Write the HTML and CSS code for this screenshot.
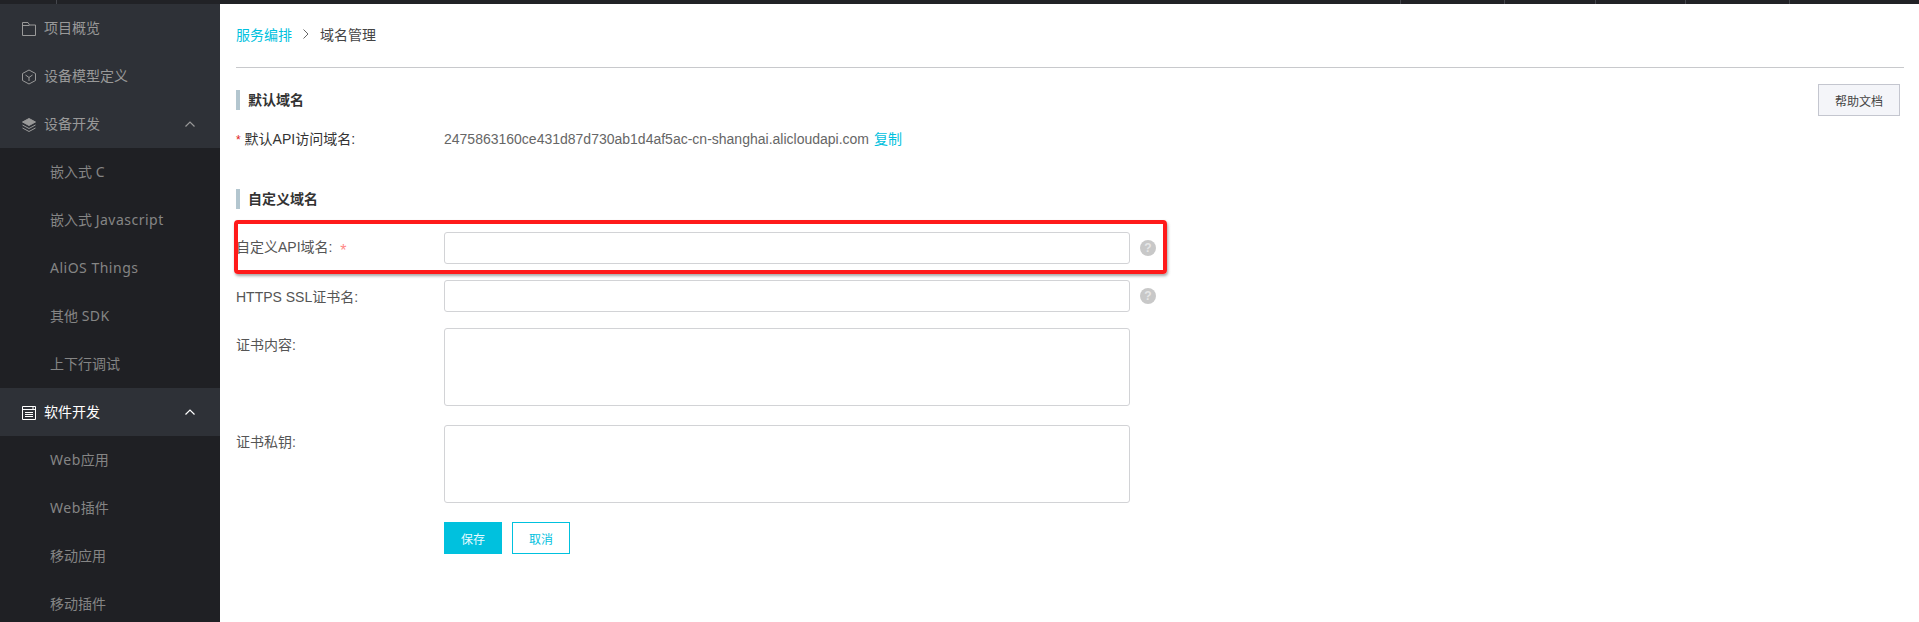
FILE: index.html
```html
<!DOCTYPE html>
<html lang="zh">
<head>
<meta charset="utf-8">
<title>域名管理</title>
<link rel="stylesheet" href="styles.css">
</head>
<body>
<div class="topbar"><i class="tick t1"></i><i class="tick t2"></i><i class="tick t3"></i><i class="tick t4"></i><i class="tick t5"></i><i class="tick t6"></i></div>
<div class="shell">
  <aside class="sidebar">
    <div class="nav-item"><svg class="nav-icon" viewBox="0 0 16 16" fill="none" stroke="currentColor"><path d="M1.5 14.5V1.5H7L8.5 4H14.5V14.5ZM1.5 4.5H8.5"/></svg><span>项目概览</span></div>
    <div class="nav-item"><svg class="nav-icon" viewBox="0 0 16 16" fill="none" stroke="currentColor"><path d="M8 1L14.5 4.5V11.5L8 15L1.5 11.5V4.5ZM4.5 6L8 8.5L11.5 6M8 8.5V12"/></svg><span>设备模型定义</span></div>
    <div class="nav-item"><svg class="nav-icon" viewBox="0 0 16 16" fill="none" stroke="currentColor"><path d="M8 1.5L14.5 5L8 8.5L1.5 5Z" fill="currentColor"/><path d="M1.5 8L8 11.5L14.5 8M1.5 11L8 14.5L14.5 11"/></svg><span>设备开发</span><svg class="chevron" viewBox="0 0 10 6" fill="none" stroke="currentColor" stroke-width="1.2"><path d="M.5 5.5L5 1L9.5 5.5"/></svg></div>
    <div class="sub-item"><span>嵌入式 <b class="latin">C</b></span></div>
    <div class="sub-item"><span>嵌入式 <b class="latin">Javascript</b></span></div>
    <div class="sub-item"><b class="latin">AliOS Things</b></div>
    <div class="sub-item"><span>其他 <b class="latin">SDK</b></span></div>
    <div class="sub-item">上下行调试</div>
    <div class="nav-item active"><svg class="nav-icon" viewBox="0 0 16 16" fill="none" stroke="currentColor"><path d="M1.5 1.5H14.5V14.5H1.5ZM1.5 4.5H14.5M11 3H13M4 7.5H12M4 9.5H12M4 11.5H12"/></svg><span>软件开发</span><svg class="chevron" viewBox="0 0 10 6" fill="none" stroke="currentColor" stroke-width="1.2"><path d="M.5 5.5L5 1L9.5 5.5"/></svg></div>
    <div class="sub-item"><span><b class="latin">Web</b>应用</span></div>
    <div class="sub-item"><span><b class="latin">Web</b>插件</span></div>
    <div class="sub-item">移动应用</div>
    <div class="sub-item">移动插件</div>
  </aside>
  <main class="content">
    <div class="breadcrumb"><a class="link">服务编排</a><svg class="crumb-sep" viewBox="0 0 8 12" fill="none" stroke="currentColor"><path d="M1.5 1.5L6 6L1.5 10.5"/></svg><span>域名管理</span></div>
    <div class="section-head">
      <h2 class="section-title">默认域名</h2>
      <button class="help-btn" type="button">帮助文档</button>
    </div>
    <div class="info-row">
      <div class="label strong"><span class="mini-star">*</span> 默认API访问域名:</div>
      <div class="value">2475863160ce431d87d730ab1d4af5ac-cn-shanghai.alicloudapi.com <a class="link copy">复制</a></div>
    </div>
    <h2 class="section-title second">自定义域名</h2>
    <div class="form">
      <div class="form-row">
        <label class="label">自定义API域名: <span class="star">*</span></label>
        <input class="field" type="text">
        <span class="hint">?</span>
      </div>
      <div class="form-row">
        <label class="label">HTTPS SSL证书名:</label>
        <input class="field" type="text">
        <span class="hint">?</span>
      </div>
      <div class="form-row tall">
        <label class="label">证书内容:</label>
        <textarea class="field area"></textarea>
      </div>
      <div class="form-row tall">
        <label class="label">证书私钥:</label>
        <textarea class="field area"></textarea>
      </div>
      <div class="actions">
        <button class="btn primary" type="button">保存</button>
        <button class="btn outline" type="button">取消</button>
      </div>
    </div>
    <div class="annotation"></div>
  </main>
</div>
</body>
</html>
```
FILE: styles.css
```css
* { box-sizing: border-box; }
html, body { margin: 0; height: 100%; overflow: hidden; background: #fff; }
body { font-family: "Liberation Sans", "Noto Sans CJK SC", sans-serif; font-size: 14px; color: #333; }
.topbar { height: 4px; background: #212226; position: relative; }
.tick { position: absolute; top: 0; width: 1px; height: 4px; background: #44464c; }
.t1 { left: 56px; }
.t2 { left: 1400px; }
.t3 { left: 1504px; }
.t4 { left: 1595px; }
.t5 { left: 1685px; }
.t6 { left: 1789px; }
.shell { display: flex; height: 618px; }
.sidebar { width: 220px; flex: none; background: #1f2024; overflow: hidden; font-family: "Noto Sans", "Noto Sans CJK SC", sans-serif; }
.nav-item { height: 48px; display: flex; align-items: center; padding: 0 0 2px 21px; background: #2e3137; color: #999; font-size: 14px; }
.nav-item span { margin-left: 7px; flex: 1; }
.nav-item.active { color: #fff; }
.nav-icon { width: 16px; height: 16px; flex: none; margin-top: 4px; }
.chevron { width: 10px; height: 6px; margin: 2px 25px 0 0; flex: none; }
.sub-item { height: 48px; display: flex; align-items: center; padding: 0 0 2px 50px; color: #858585; font-size: 14px; }
.latin { font-weight: normal; letter-spacing: .5px; }
.content { flex: 1; position: relative; padding: 0 15px 0 16px; }
.link { color: #00c1de; text-decoration: none; }
.copy { margin-left: 1px; }
.breadcrumb { height: 64px; border-bottom: 1px solid #c8c9cc; display: flex; align-items: center; padding-bottom: 3px; color: #444; }
.crumb-sep { width: 8px; height: 12px; margin: 0 10px; color: #666; }
.section-head { display: flex; justify-content: space-between; align-items: flex-start; margin-top: 16px; padding-right: 4px; height: 33px; }
.section-title { margin: 0; height: 20px; line-height: 20px; border-left: 4px solid #b3c6cf; padding-left: 8px; font-size: 14px; font-weight: bold; color: #333; }
.section-head .section-title { margin-top: 6px; }
.section-title.second { margin-top: 39px; }
.help-btn { width: 82px; height: 32px; background: #f4f5f9; border: 1px solid #c4c6cf; color: #444; font: 12px "Liberation Sans", "Noto Sans CJK SC", sans-serif; padding: 0; }
.info-row { display: flex; align-items: center; height: 24px; margin-top: 9px; }
.label { width: 208px; flex: none; color: #555; font-size: 14px; padding-bottom: 1px; }
.label.strong { color: #333; padding-bottom: 0; }
.mini-star { color: #e02020; font-size: 12px; }
.value { color: #666; font-size: 14px; }
.form { margin-top: 23px; }
.form-row { display: flex; align-items: center; height: 32px; margin-bottom: 16px; }
.form-row.tall { height: 78px; align-items: flex-start; margin-bottom: 19px; }
.form-row.tall .label { padding-top: 6px; }
.star { color: #f88; margin-left: 4px; font-size: 16px; line-height: 1; vertical-align: -4px; }
.field { width: 686px; height: 32px; border: 1px solid #d2d3d6; border-radius: 3px; background: #fff; outline: none; padding: 0; }
.area { height: 78px; resize: none; display: block; }
.hint { width: 16px; height: 16px; border-radius: 50%; background: #c8c8c8; color: #e6e6e6; font-size: 12px; font-weight: bold; line-height: 16px; text-align: center; margin-left: 10px; }
.actions { display: flex; gap: 10px; margin-left: 208px; }
.btn { width: 58px; height: 32px; font: 12px "Liberation Sans", "Noto Sans CJK SC", sans-serif; padding: 0; }
.primary { background: #00c1de; border: 1px solid #00c1de; color: #e8fbff; }
.outline { background: #fff; border: 1px solid #00c1de; color: #00c1de; }
.annotation { position: absolute; left: 14px; top: 216px; width: 933px; height: 54px; border: 4px solid #ff1a1a; border-radius: 4px; box-shadow: 1px 2px 3px rgba(60, 60, 60, .45); pointer-events: none; }
```
